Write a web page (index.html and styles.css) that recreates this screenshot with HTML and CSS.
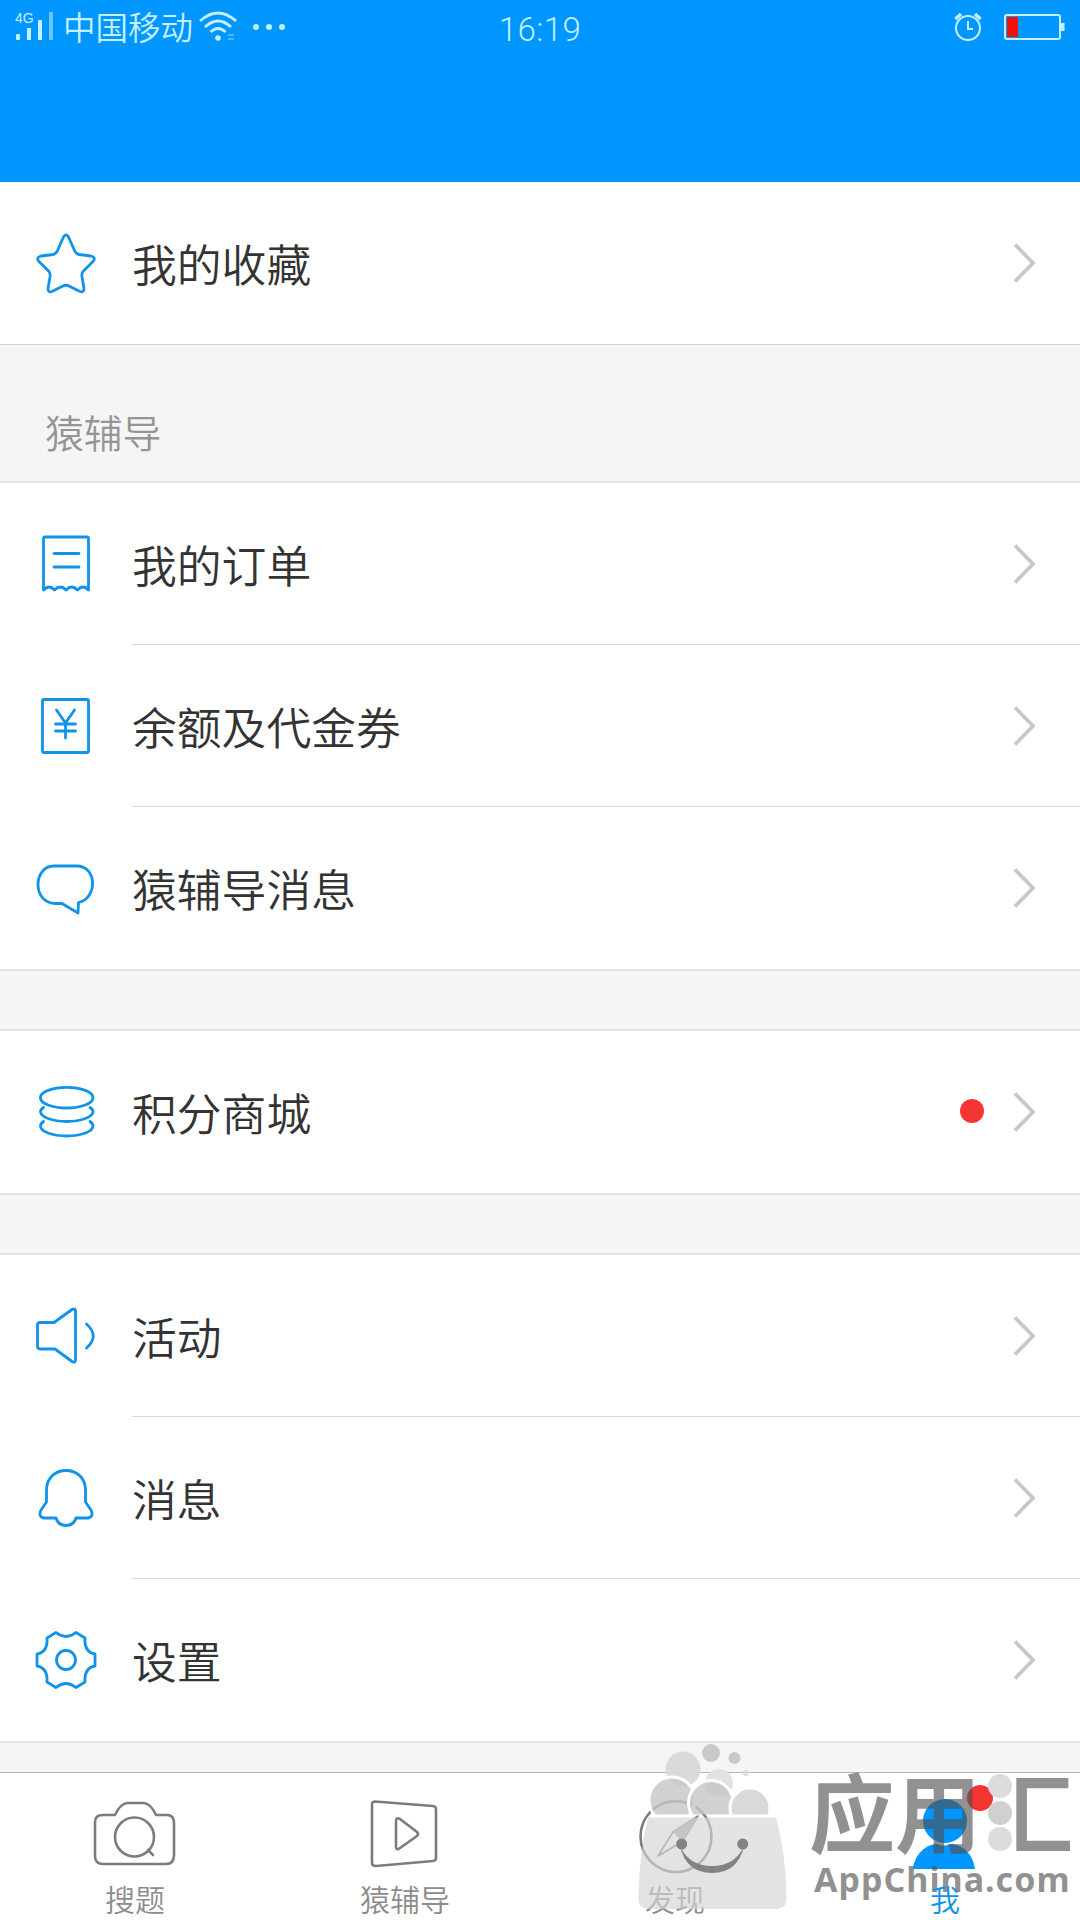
FILE: index.html
```html
<!DOCTYPE html>
<html lang="zh-CN">
<head>
<meta charset="utf-8">
<title>我</title>
<link rel="stylesheet" href="styles.css">
</head>
<body>
<svg class="defs" width="0" height="0" aria-hidden="true">
  <symbol id="arrow" viewBox="0 0 24 42"><path d="M2 2.500 20 21 2 39.500" fill="none" stroke="#c8c8c8" stroke-width="3.800"/></symbol>
</svg>
<div class="screen">
  <header class="topbar">
    <div class="status">
      <div class="status-left">
        <svg class="signal" width="40" height="30" viewBox="0 0 40 30">
          <text x="0" y="11" class="net">4G</text>
          <g fill="#c4f0ff"><rect x="1" y="22" width="4" height="6" rx="1"/><rect x="12" y="16" width="4" height="12"/><rect x="23" y="8" width="4" height="20" rx="1"/></g>
          <rect x="34" y="0" width="4" height="28" fill="#6cc4ff"/>
        </svg>
        <span class="carrier">中国移动</span>
        <svg class="wifi" width="38" height="32" viewBox="0 0 38 32">
          <g fill="none" stroke="#c4f0ff" stroke-width="2.800"><path d="M1 10Q19-6 37 10"/><path d="M6 16Q19 4 32 16"/><path d="M11.500 21Q19 14 26.500 21"/></g>
          <circle cx="19" cy="27" r="2.800" fill="#c4f0ff"/><path d="M29 24h6M29 28h6" stroke="#6cc4ff" stroke-width="1.500"/>
        </svg>
        <svg class="more" width="34" height="8" viewBox="0 0 34 8" fill="#c4f0ff"><circle cx="4" cy="4" r="3"/><circle cx="17" cy="4" r="3"/><circle cx="30" cy="4" r="3"/></svg>
      </div>
      <div class="clock">16:19</div>
      <div class="status-right">
        <svg width="30" height="30" viewBox="0 0 30 30" fill="none" stroke="#c4f0ff" stroke-width="2">
          <circle cx="15" cy="16" r="12"/><path d="M15 9v8h5"/><path d="M2.500 7 8 2M27.500 7 22 2" stroke-width="3.500"/>
        </svg>
        <svg width="61" height="28" viewBox="0 0 61 28">
          <rect x="1" y="2" width="55" height="24" rx="2" fill="none" stroke="#c4f0ff" stroke-width="2"/><rect x="3" y="4" width="11" height="20" fill="#f5100c"/><rect x="57" y="10" width="3.500" height="8" fill="#c4f0ff"/>
        </svg>
      </div>
    </div>
  </header>

  <main class="content">
    <section class="group first">
      <div class="row">
        <svg class="icon" viewBox="0 0 64 64"><path d="M29.500 6Q32 2 34.500 6L40.500 19.500Q42 23 45 23.500L57 25Q62.500 26.500 59 30.500L49 40.500Q47.500 42.500 48 46L50 57.500Q50 62 46 60.500L35 55Q32 53.500 29 55L18 60.500Q14 62 14 57.500L16 46Q16.500 42.500 15 40.500L5 30.500Q1.500 26.500 7 25L19 23.500Q22 23 23.500 19.500Z"/></svg>
        <span class="label">我的收藏</span>
        <svg class="arrow"><use href="#arrow"/></svg>
      </div>
    </section>
    <h2 class="section-title">猿辅导</h2>
    <section class="group">
      <div class="row">
        <svg class="icon" viewBox="0 0 64 64"><path d="M9.500 58V6.500Q9.500 5 11 5H53Q54.500 5 54.500 6.500V58Q49 52 43.500 58Q37.500 52 32 58Q26.500 52 20.500 58Q15 52 9.500 58ZM20 21.500H45M20 35H45"/></svg>
        <span class="label">我的订单</span>
        <svg class="arrow"><use href="#arrow"/></svg>
      </div>
      <div class="row">
        <svg class="icon" viewBox="0 0 64 64"><rect x="8.500" y="5.500" width="46" height="53" rx="1.500"/><path d="M22.500 16 31.500 29 40.500 16M21.500 30H41.500M21.500 37H41.500M31.500 30V44"/></svg>
        <span class="label">余额及代金券</span>
        <svg class="arrow"><use href="#arrow"/></svg>
      </div>
      <div class="row">
        <svg class="icon" viewBox="0 0 64 64"><path d="M20 10H43C63 10 64 42 44.500 46.500L44 57 28 47.500H21C-2 47-1 10 20 10Z"/></svg>
        <span class="label">猿辅导消息</span>
        <svg class="arrow"><use href="#arrow"/></svg>
      </div>
    </section>
    <section class="group">
      <div class="row">
        <svg class="icon" viewBox="0 0 64 64"><ellipse cx="32.700" cy="17.700" rx="26.300" ry="10.300"/><path d="M9.500 27.500Q6.500 29.500 6.500 31.500C6.500 37 18 41.500 32.700 41.500S59 37 59 31.500Q59 29.500 56 27.500M9.500 41.500Q6.500 43.500 6.500 46C6.500 51.500 18 56 32.700 56S59 51.500 59 46Q59 43.500 56 41.500"/></svg>
        <span class="label">积分商城</span>
        <i class="dot"></i>
        <svg class="arrow"><use href="#arrow"/></svg>
      </div>
    </section>
    <section class="group">
      <div class="row">
        <svg class="icon" viewBox="0 0 64 64"><path d="M6 18.500H20L38 5.500Q41.500 4 41.500 7V56Q41.500 59.500 38 57.500L21 45H6Q3.500 45 3.500 42V21Q3.500 18.500 6 18.500ZM52.500 20Q66 32 52.500 44"/></svg>
        <span class="label">活动</span>
        <svg class="arrow"><use href="#arrow"/></svg>
      </div>
      <div class="row">
        <svg class="icon" viewBox="0 0 64 64"><path d="M12.500 24C12.500-2 51.500-2 51.500 24V36L57 44Q60 51 54 52H42C39 62 25 62 22 52H10Q4 51 7 44L12.500 36Z"/></svg>
        <span class="label">消息</span>
        <svg class="arrow"><use href="#arrow"/></svg>
      </div>
      <div class="row">
        <svg class="icon" viewBox="0 0 64 64"><path d="M22 4.500Q32 12.500 42 4.500L51 10Q50 24 61 26V38Q50 40 51 54L42 59.500Q32 51.500 22 59.500L13 54Q14 40 3 38V26Q14 24 13 10Z"/><circle cx="32" cy="32" r="9.500"/></svg>
        <span class="label">设置</span>
        <svg class="arrow"><use href="#arrow"/></svg>
      </div>
    </section>
  </main>

  <nav class="tabs">
    <div class="tab">
      <svg class="tab-icon" viewBox="0 0 84 72"><path d="M10 18H22Q27 7 34 6H51Q58 7 63 18H74Q81 18 81 26V58Q81 67 73 67H10Q2 67 2 59V25Q2 18 10 18Z"/><circle cx="41.500" cy="40" r="19.500"/><path d="M55 53 60 58"/></svg>
      <span>搜题</span>
    </div>
    <div class="tab">
      <svg class="tab-icon" viewBox="0 0 84 72"><path d="M12 4.500 70 9Q73 9.500 73 12V61Q73 63.500 70 64L13 69Q9 69 9 66V7Q9 4.500 12 4.500Z"/><path d="M33 24Q33 20 37 22L54 35Q56 37 54 39L37 51Q33 54 33 50Z"/></svg>
      <span>猿辅导</span>
    </div>
    <div class="tab">
      <svg class="tab-icon" viewBox="0 0 84 72"><circle cx="43" cy="39.500" r="35.500"/><path d="M65 19 49 45 25 59 40 35Z" stroke-width="1.500"/><path d="M65 19 49 45 40 35Z" fill="#aaa" stroke="none"/></svg>
      <span>发现</span>
    </div>
    <div class="tab active">
      <svg class="tab-icon" viewBox="0 0 84 72"><circle cx="42" cy="24" r="22"/><path d="M10 72C12 56 24 47 34 47Q41 50 48 47C58 47 70 56 72 72Z"/></svg>
      <i class="tab-dot"></i>
      <span>我</span>
    </div>
  </nav>

  <div class="watermark">
    <svg class="bag" width="160" height="172" viewBox="0 0 160 172">
      <clipPath id="bag-mouth"><rect x="0" y="0" width="160" height="71.500"/></clipPath>
      <g clip-path="url(#bag-mouth)">
        <circle cx="82" cy="40" r="14" fill="#e2e2e2"/>
        <circle cx="46" cy="26" r="17.500" fill="#d8d8d8" fill-opacity=".95"/>
        <g fill="#c6c6c6" fill-opacity=".8" stroke="#fff" stroke-width="3"><circle cx="35" cy="57" r="23"/><circle cx="74" cy="60" r="22.500"/><circle cx="113" cy="65" r="20" fill="#d0d0d0"/></g>
        <g fill="#c9c9c9"><circle cx="74" cy="10" r="9"/><circle cx="97.500" cy="15" r="6"/><circle cx="108.700" cy="30" r="3" fill="#dedede"/></g>
      </g>
      <path d="M11 74.500H139Q149 110 149.500 155Q150 166 138 166H13Q1 166 1.500 155Q2 110 11 74.500Z" fill="#d4d4d4" fill-opacity=".65"/>
      <g fill="#838383"><circle cx="44.700" cy="101" r="5.500"/><circle cx="105.700" cy="101" r="5.500"/><path d="M43 103Q52 123 75 123T107 103Q101 130 75 130T43 103Z"/></g>
    </svg>
    <div class="brand">
      <div class="brand-cn">应用<span class="last">汇</span><svg class="drops" width="24" height="78" viewBox="0 0 24 78" fill="#dcdcdc"><circle cx="12" cy="12" r="12"/><circle cx="12" cy="39" r="12" fill="#d0d0d0"/><circle cx="12" cy="65" r="12"/></svg></div>
      <div class="brand-en">AppChina.com</div>
    </div>
  </div>
</div>
</body>
</html>
```
FILE: styles.css
```css
* { box-sizing: border-box; }

body {
  margin: 0;
  font-family: "Noto Sans CJK SC", sans-serif;
  color: #333;
}

.defs { position: absolute; }

.screen {
  position: relative;
  width: 1080px;
  height: 1920px;
  overflow: hidden;
  display: flex;
  flex-direction: column;
  background: #f5f5f5;
}

/* Top bar */
.topbar { height: 182px; flex: none; background: #0096ff; color: #c4f0ff; }
.status {
  display: grid;
  grid-template-columns: 1fr auto 1fr;
  align-items: center;
  height: 54px;
  padding: 0 15px;
}
.status-left { display: flex; align-items: center; }
.signal { overflow: visible; margin-top: -2px; }
.net { font: 500 14px "Liberation Sans", sans-serif; fill: #c4f0ff; }
.carrier { margin: -5px 0 0 8px; font-size: 32.500px; font-weight: 350; line-height: 48px; }
.wifi { margin: -2px 0 0 6px; }
.more { margin: -2px 0 0 15px; }
.clock { font: 300 33px/52px Roboto, sans-serif; letter-spacing: 0.500px; padding-top: 4px; }
.status-right { display: flex; align-items: center; justify-content: flex-end; gap: 21px; margin-top: -3px; }

/* Menu list */
.content { flex: none; height: 1590px; }
.group { background: #fff; border-bottom: 2px solid #e4e4e4; }
.group.first { border-bottom: 1px solid #d4d4d4; }
.group + .group { margin-top: 58px; border-top: 2px solid #e4e4e4; }
.row {
  position: relative;
  display: flex;
  align-items: center;
  height: 162px;
  padding: 0 43px 0 34px;
}
.row + .row::before {
  content: "";
  position: absolute;
  left: 132px;
  right: 0;
  top: -1px;
  height: 1px;
  background: #d9d9d9;
}
.icon {
  width: 64px;
  height: 64px;
  fill: none;
  stroke: #1093e8;
  stroke-width: 2.800;
  stroke-linejoin: round;
  stroke-linecap: round;
}
.label { flex: 1; margin: -1px 0 0 34px; font-size: 44.800px; font-weight: 350; line-height: 64px; }
.arrow { width: 24px; height: 42px; }
.dot { width: 24px; height: 24px; margin: -2px 29px 0 0; border-radius: 50%; background: #f43531; }
.section-title {
  margin: 0;
  height: 138px;
  padding: 56px 0 0 45px;
  border-bottom: 2px solid #e6e6e6;
  font-size: 38.800px;
  line-height: 60px;
  font-weight: 350;
  color: #959595;
}

/* Tab bar */
.tabs {
  flex: none;
  display: grid;
  grid-template-columns: repeat(4, 1fr);
  height: 148px;
  background: #fff;
  border-top: 1px solid #b8b8b8;
}
.tab {
  position: relative;
  display: flex;
  flex-direction: column;
  align-items: center;
  padding-top: 24px;
  font-size: 30px;
  font-weight: 350;
  line-height: 34px;
  color: #8c8c8c;
}
.tab span { margin-top: 12px; }
.tab-icon {
  width: 84px;
  height: 72px;
  overflow: visible;
  fill: none;
  stroke: #7c7c7c;
  stroke-width: 2.600;
  stroke-linejoin: round;
  stroke-linecap: round;
}
.active { color: #1093e8; }
.active span { position: relative; z-index: 2; }
.active .tab-icon { fill: #0096ff; stroke: none; }
.tab-dot {
  position: absolute;
  left: 157px;
  top: 12px;
  width: 26px;
  height: 26px;
  border-radius: 50%;
  background: #f43531;
}

/* Store watermark laid over the tab bar */
.watermark { position: absolute; left: 637px; top: 1743px; display: flex; z-index: 1; }
.bag { flex: none; }
.brand { margin-left: 12px; color: rgba(80, 80, 80, 0.63); }
.brand-cn { position: relative; height: 110px; font-size: 86px; font-weight: 700; line-height: 133px; white-space: nowrap; }
.last { display: inline-block; margin-left: 6px; clip-path: inset(0 0 0 34%); }
.drops { position: absolute; left: 179px; top: 31px; }
.brand-en { margin: 4px 0 0 5px; font: 700 34px/44px "Noto Sans", sans-serif; letter-spacing: 1px; }
```
